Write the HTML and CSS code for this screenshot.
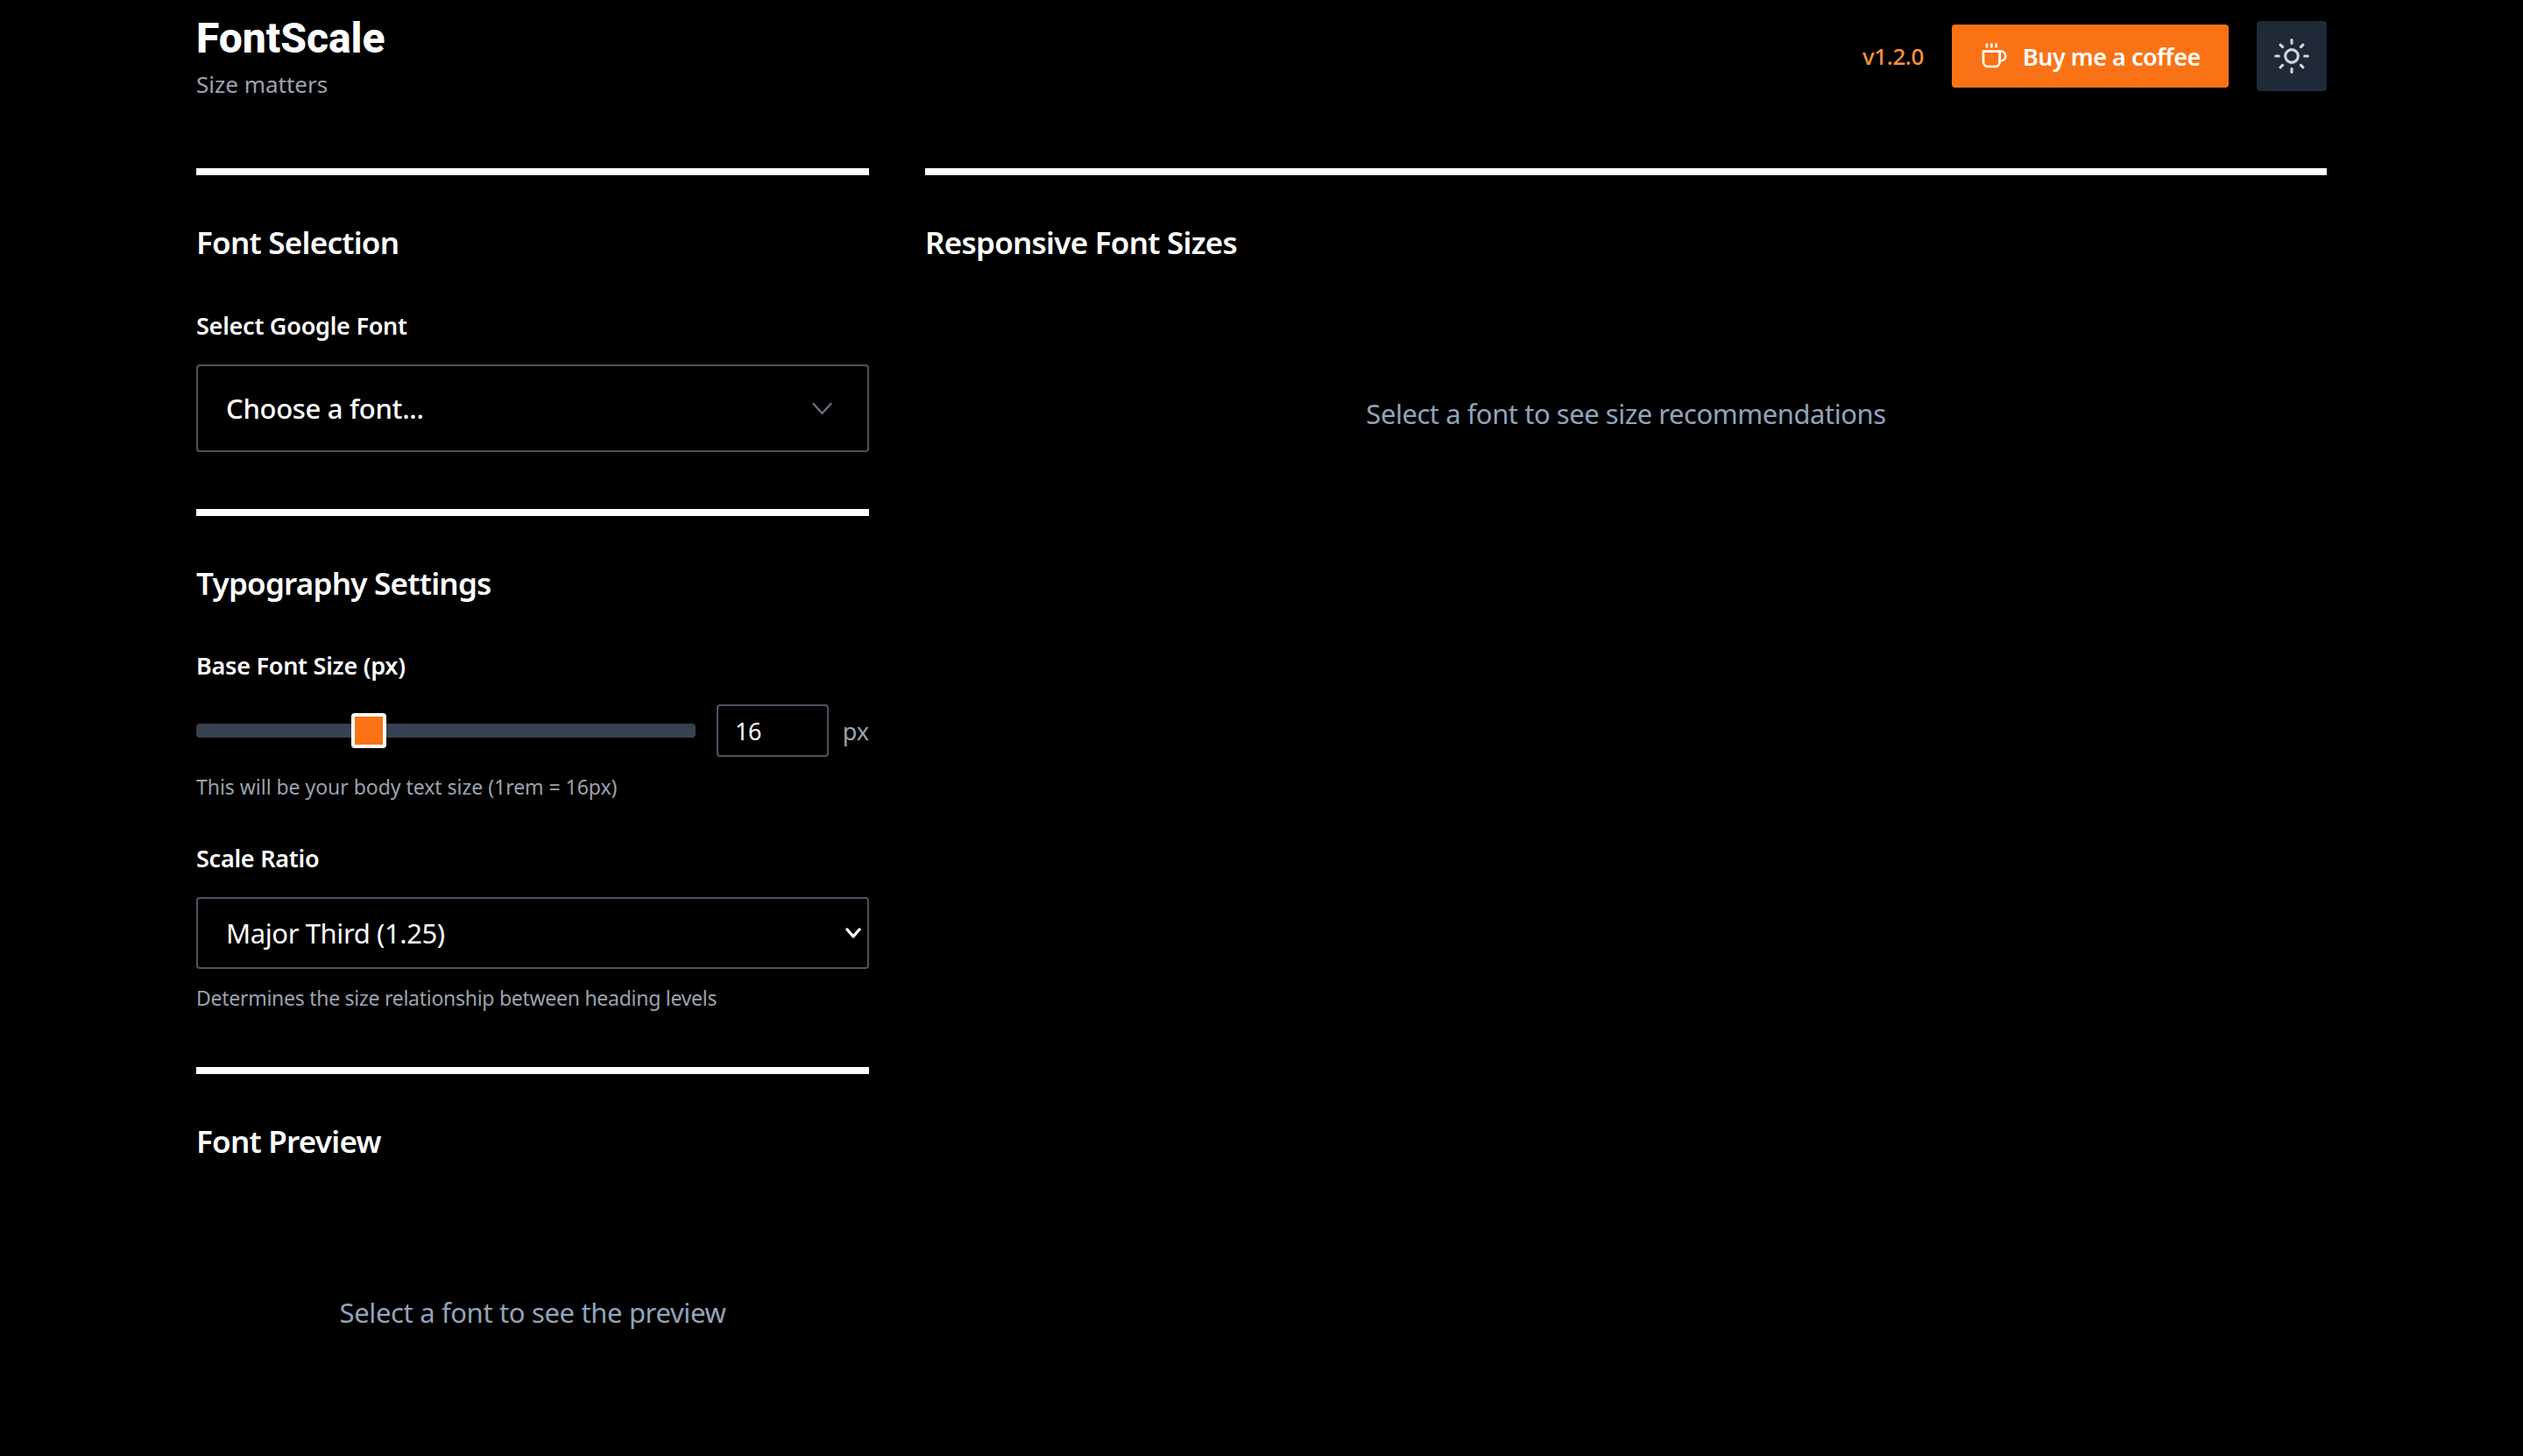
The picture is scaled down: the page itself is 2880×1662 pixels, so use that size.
FILE: index.html
```html
<!DOCTYPE html>
<html lang="en">
<head>
<meta charset="utf-8">
<title>FontScale</title>
<link rel="stylesheet" href="styles.css">
</head>
<body>
<div class="page">
  <header class="header">
    <div class="brand">
      <h1 class="logo">FontScale</h1>
      <p class="tagline">Size matters</p>
    </div>
    <div class="actions">
      <span class="version">v1.2.0</span>
      <a class="coffee" href="#">
        <svg class="coffee-icon" viewBox="0 0 24 24" fill="none" stroke="currentColor" stroke-width="2" stroke-linecap="round" stroke-linejoin="round"><path d="M17 8h1a4 4 0 1 1 0 8h-1"/><path d="M3 8h14v9a4 4 0 0 1-4 4H7a4 4 0 0 1-4-4Z"/><line x1="6" y1="2" x2="6" y2="4"/><line x1="10" y1="2" x2="10" y2="4"/><line x1="14" y1="2" x2="14" y2="4"/></svg>
        Buy me a coffee
      </a>
      <button class="theme" type="button" aria-label="Toggle theme">
        <svg class="sun-icon" viewBox="0 0 24 24" fill="none" stroke="currentColor" stroke-width="1.7" stroke-linecap="round" stroke-linejoin="round"><circle cx="12" cy="12" r="4"/><path d="M12 2v2"/><path d="M12 20v2"/><path d="m4.93 4.93 1.41 1.41"/><path d="m17.66 17.66 1.41 1.41"/><path d="M2 12h2"/><path d="M20 12h2"/><path d="m6.34 17.66-1.41 1.41"/><path d="m19.07 4.93-1.41 1.41"/></svg>
      </button>
    </div>
  </header>
  <main class="columns">
    <div class="left">
      <section class="panel panel-font">
        <h2 class="panel-title">Font Selection</h2>
        <label class="label">Select Google Font</label>
        <div class="combo">
          <span>Choose a font...</span>
          <svg class="chevron" viewBox="0 0 24 14" fill="none" stroke="currentColor" stroke-width="2.4"><path d="M1 1l11 12L23 1"/></svg>
        </div>
      </section>
      <section class="panel panel-type">
        <h2 class="panel-title">Typography Settings</h2>
        <label class="label">Base Font Size (px)</label>
        <div class="size-row">
          <input class="slider" type="range" min="12" max="24" value="16">
          <input class="size-input" type="text" value="16">
          <span class="unit">px</span>
        </div>
        <p class="hint">This will be your body text size (1rem = 16px)</p>
        <label class="label label-ratio">Scale Ratio</label>
        <div class="ratio-wrap">
          <select class="ratio"><option>Major Third (1.25)</option></select>
          <svg class="ratio-arrow" viewBox="0 0 18 12" fill="none" stroke="currentColor" stroke-width="3.4" stroke-linecap="round" stroke-linejoin="round"><path d="M2 2l7 8 7-8"/></svg>
        </div>
        <p class="hint hint-ratio">Determines the size relationship between heading levels</p>
      </section>
      <section class="panel panel-preview">
        <h2 class="panel-title">Font Preview</h2>
        <p class="empty empty-preview">Select a font to see the preview</p>
      </section>
    </div>
    <section class="panel right">
      <h2 class="panel-title">Responsive Font Sizes</h2>
      <p class="empty empty-sizes">Select a font to see size recommendations</p>
    </section>
  </main>
</div>
</body>
</html>
```
FILE: styles.css
```css
* { box-sizing: border-box; }
html, body { margin: 0; height: 100%; background: #000; }
body { font-family: "Noto Sans", "Open Sans", sans-serif; color: #fff; overflow: hidden; }
.page { padding: 0 224px; }
.header { display: flex; justify-content: space-between; height: 192px; padding-top: 24px; }
.logo { margin: 0; font: 800 48px/40px Roboto, sans-serif; color: #fff; }
.tagline { margin: 12px 0 0; font-size: 26px; line-height: 40px; color: #9ca3af; }
.actions { display: flex; align-items: center; height: 80px; }
.version { font-size: 26px; font-weight: 500; letter-spacing: -0.4px; color: #fb923c; margin-right: 32px; }
.coffee { display: flex; align-items: center; gap: 17px; width: 316px; height: 72px; padding-left: 32px; border-radius: 4px; background: #f97316; color: #fff; font-size: 27px; font-weight: 600; letter-spacing: -0.5px; text-decoration: none; }
.coffee-icon { width: 32px; height: 32px; }
.theme { display: flex; align-items: center; justify-content: center; width: 80px; height: 80px; margin-left: 32px; padding: 0; border: 0; border-radius: 4px; background: #1f2937; color: #d1d5db; }
.sun-icon { width: 44px; height: 44px; }
.columns { display: grid; grid-template-columns: 768px 1600px; gap: 64px; align-items: start; }
.panel { border-top: 8px solid #fff; }
.panel-title { margin: 0; padding-top: 55px; font-size: 35px; line-height: 44px; font-weight: 600; letter-spacing: -0.75px; color: #fff; }
.label { display: block; font-size: 27px; line-height: 36px; font-weight: 600; letter-spacing: -0.25px; color: #fff; }
.panel-font { height: 389px; }
.panel-font .label { margin-top: 55px; }
.combo { display: flex; align-items: center; justify-content: space-between; height: 100px; margin-top: 26px; padding: 0 40px 0 32px; border: 2px solid #4b5563; border-radius: 4px; font-size: 31px; font-weight: 500; letter-spacing: -0.3px; color: #fff; }
.chevron { width: 23px; height: 14px; color: #6b7280; }
.panel-type { height: 637px; }
.panel-type .label { margin-top: 54px; }
.size-row { display: flex; align-items: center; height: 60px; margin-top: 26px; }
.slider { appearance: none; -webkit-appearance: none; width: 570px; height: 16px; margin: 0; border-radius: 4px; background: #374151; outline: none; }
.slider::-webkit-slider-thumb { -webkit-appearance: none; width: 40px; height: 40px; border: 4px solid #fff; border-radius: 4px; background: #f97316; }
.size-input { width: 128px; height: 60px; margin-left: 24px; padding: 0 19px; border: 2px solid #4b5563; border-radius: 4px; background: #000; color: #fff; font: 27px "Noto Sans", sans-serif; letter-spacing: -0.5px; }
.unit { margin-left: auto; font-size: 27px; color: #9ca3af; }
.hint { margin: 0; font-size: 23px; line-height: 32px; letter-spacing: -0.03px; color: #9ca3af; }
.size-row + .hint { margin-top: 18px; }
.panel-type .label-ratio { margin-top: 48px; }
.ratio-wrap { position: relative; margin-top: 26px; }
.ratio { display: block; width: 100%; height: 82px; padding: 0 32px; border: 2px solid #4b5563; border-radius: 4px; appearance: none; -webkit-appearance: none; background: #000; color: #fff; font: 31px "Noto Sans", sans-serif; letter-spacing: -0.4px; }
.ratio-arrow { position: absolute; top: 35px; right: 9px; width: 18px; height: 12px; color: #fff; pointer-events: none; }
.hint-ratio { margin-top: 17px; letter-spacing: -0.27px; }
.empty { margin: 0; text-align: center; font-size: 31px; line-height: 44px; letter-spacing: -0.47px; color: #94a3b8; }
.empty-preview { margin-top: 151px; letter-spacing: -0.35px; }
.empty-sizes { margin-top: 151px; }
```
